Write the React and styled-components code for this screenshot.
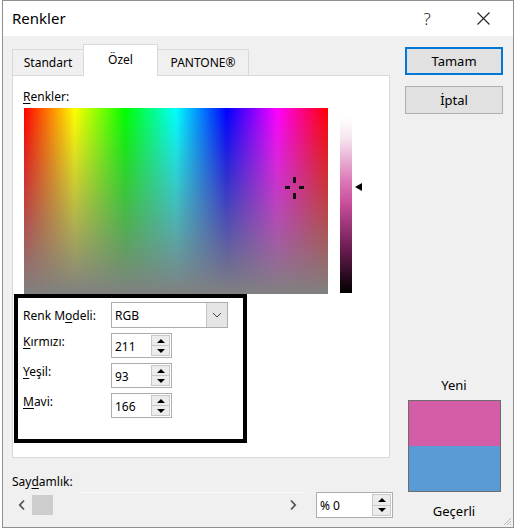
import React from 'react';
import styled, { createGlobalStyle } from 'styled-components';

const GlobalStyle = createGlobalStyle`
  html, body {
    margin: 0;
    padding: 0;
    background: #fff;
  }
  body {
    font-family: "Noto Sans", "Segoe UI", sans-serif;
    font-size: 12px;
    color: #000;
  }
`;

// window frame
const Dialog = styled.div`
  position: relative;
  box-sizing: border-box;
  width: 512px;
  height: 528px;
  margin-left: 2px;
  border: 1px solid #8f8f8f;
  background: #f0f0f0;
  display: flex;
  flex-direction: column;
`;

const TitleBar = styled.div`
  height: 35px;
  flex: none;
  background: #fff;
  display: flex;
  align-items: center;
  padding-left: 9px;
`;

const Title = styled.div`
  flex: 1;
  font-size: 15px;
  padding-bottom: 1px;
`;

const CaptionButton = styled.div`
  width: 30px;
  height: 30px;
  display: flex;
  align-items: center;
  justify-content: center;
  margin-right: ${(p) => p.$mr || 0}px;
  font-size: 17px;
  font-weight: 300;
  color: #222;
`;

const Body = styled.div`
  flex: 1;
  display: flex;
  padding-left: 9px;
`;

const LeftCol = styled.div`
  width: 378px;
  flex: none;
  display: flex;
  flex-direction: column;
  padding-top: 8px;
`;

// tabs
const TabRow = styled.div`
  height: 31px;
  display: flex;
  align-items: flex-end;
  position: relative;
  z-index: 1;
`;

const Tab = styled.div`
  box-sizing: border-box;
  width: ${(p) => p.$w}px;
  height: ${(p) => (p.$active ? 32 : 26)}px;
  margin-bottom: ${(p) => (p.$active ? -1 : 0)}px;
  margin-right: -1px;
  border: 1px solid #d9d9d9;
  border-bottom: none;
  background: ${(p) => (p.$active ? '#fff' : '#f0f0f0')};
  display: flex;
  align-items: center;
  justify-content: center;
  padding-bottom: ${(p) => (p.$active ? 3 : 0)}px;
`;

const Panel = styled.div`
  box-sizing: border-box;
  height: 383px;
  background: #fff;
  border: 1px solid #d9d9d9;
  display: flex;
  flex-direction: column;
`;

const Label = styled.div`
  line-height: 16px;
  white-space: nowrap;
`;

const PanelLabel = styled(Label)`
  margin: 13px 0 0 10px;
`;

const U = styled.span`
  text-decoration: underline;
  text-underline-offset: 2px;
`;

const PickerRow = styled.div`
  display: flex;
  align-items: flex-start;
  margin: 3px 0 0 11px;
`;

const Spectrum = styled.div`
  position: relative;
  width: 304px;
  height: 186px;
  background:
    linear-gradient(to bottom, rgba(128, 128, 128, 0), rgb(128, 128, 128)),
    linear-gradient(
      to right,
      #f00,
      #ff0 16.67%,
      #0f0 33.33%,
      #0ff 50%,
      #00f 66.67%,
      #f0f 83.33%,
      #f00
    );
`;

const Crosshair = styled.svg`
  position: absolute;
  left: 261px;
  top: 69px;
`;

const LumColumn = styled.div`
  position: relative;
  margin-left: 12px;
  padding-top: 9px;
`;

const LumBar = styled.div`
  width: 12px;
  height: 176px;
  background: linear-gradient(
    to bottom,
    #fff 0%,
    #f6e6ef 12%,
    #dc7ab8 36%,
    #c64c98 50%,
    #6a1c50 75%,
    #000 100%
  );
`;

const LumArrow = styled.div`
  position: absolute;
  left: 15px;
  top: 75px;
  width: 0;
  height: 0;
  border-top: 4px solid transparent;
  border-bottom: 4px solid transparent;
  border-right: 7px solid #000;
`;

// annotation box around the colour model fields
const ModelBox = styled.div`
  box-sizing: border-box;
  width: 233px;
  height: 149px;
  margin-left: 1px;
  border: 4px solid #000;
  background: #fff;
  padding: 4px 0 0 5px;
  display: grid;
  grid-template-columns: 88px auto;
  grid-auto-rows: min-content;
  row-gap: 5px;
  align-items: start;
  position: relative;
  z-index: 1;
`;

const FieldLabel = styled(Label)`
  padding-top: ${(p) => p.$pt || 0}px;
`;

const Select = styled.div`
  box-sizing: border-box;
  width: 117px;
  height: 26px;
  border: 1px solid #adadad;
  background: #fff;
  display: flex;
  align-items: center;
`;

const SelectValue = styled.div`
  flex: 1;
  padding-left: 3px;
`;

const SelectButton = styled.div`
  box-sizing: border-box;
  width: 21px;
  height: 24px;
  background: #e5e5e5;
  border-left: 1px solid #c4c4c4;
  display: flex;
  align-items: center;
  justify-content: center;
`;

const SpinBox = styled.div`
  box-sizing: border-box;
  width: ${(p) => p.$w}px;
  height: ${(p) => p.$h}px;
  border: 1px solid #adadad;
  background: #fff;
  display: flex;
  align-items: center;
`;

const SpinValue = styled.div`
  flex: 1;
  padding-left: 3px;
  padding-top: 1px;
`;

const SpinButtons = styled.div`
  align-self: stretch;
  width: 19px;
  margin: 1px 1px 1px 0;
  display: flex;
  flex-direction: column;
  border: 1px solid #c8c8c8;
  box-sizing: border-box;
`;

const SpinBtn = styled.div`
  flex: 1;
  background: #ececec;
  display: flex;
  align-items: center;
  justify-content: center;
  border-top: ${(p) => (p.$dir === 'down' ? '1px solid #c8c8c8' : 'none')};

  &::after {
    content: '';
    width: 0;
    height: 0;
    border-left: 4px solid transparent;
    border-right: 4px solid transparent;
    ${(p) =>
      p.$dir === 'up'
        ? 'border-bottom: 4px solid #000;'
        : 'border-top: 4px solid #000;'}
  }
`;

// transparency
const TransparencyLabel = styled(Label)`
  margin-top: 16px;
`;

const ScrollRow = styled.div`
  margin-top: 2px;
  height: 26px;
  display: flex;
  align-items: center;
`;

const ScrollBar = styled.div`
  width: 291px;
  flex: none;
  height: 26px;
  display: flex;
  align-items: center;
  position: relative;

  &::before {
    content: '';
    position: absolute;
    left: 68px;
    right: 0;
    top: 0;
    height: 1px;
    background: #fafafa;
  }
`;

const ScrollArrow = styled.div`
  width: 20px;
  height: 20px;
  display: flex;
  align-items: center;
  justify-content: center;
`;

const Thumb = styled.div`
  width: 21px;
  height: 20px;
  background: #cdcdcd;
`;

const Spacer = styled.div`
  flex: 1;
`;

const PercentWrap = styled.div`
  margin-left: 13px;
`;

// right column
const RightCol = styled.div`
  width: 98px;
  flex: none;
  margin-left: 15px;
  padding: 11px 0 8px;
  display: flex;
  flex-direction: column;
`;

const Button = styled.div`
  box-sizing: border-box;
  height: 28px;
  background: #e1e1e1;
  border: ${(p) => (p.$primary ? '2px solid #0078d7' : '1px solid #adadad')};
  margin-top: ${(p) => p.$mt || 0}px;
  display: flex;
  align-items: center;
  justify-content: center;
  font-size: 13px;
`;

const PreviewGroup = styled.div`
  margin-top: auto;
  display: flex;
  flex-direction: column;
  align-items: center;
`;

const Preview = styled.div`
  box-sizing: border-box;
  width: 93px;
  height: 92px;
  margin-top: 7px;
  border: 1px solid #6d6d6d;
  display: flex;
  flex-direction: column;
`;

const Swatch = styled.div`
  flex: 1;
  background: ${(p) => p.$c};
`;

const CenterLabel = styled(Label)`
  font-size: 13px;
  margin-top: ${(p) => p.$mt || 0}px;
`;

const Grip = styled.svg`
  position: absolute;
  right: 1px;
  bottom: 1px;
`;

const Spin = ({ value, w, h }) => (
  <SpinBox $w={w} $h={h}>
    <SpinValue>{value}</SpinValue>
    <SpinButtons>
      <SpinBtn $dir="up" />
      <SpinBtn $dir="down" />
    </SpinButtons>
  </SpinBox>
);

const Chevron = ({ dir }) => (
  <svg width="8" height="12" viewBox="0 0 8 12">
    <path
      d={dir === 'left' ? 'M6 1.5 L1.8 6 L6 10.5' : 'M2 1.5 L6.2 6 L2 10.5'}
      fill="none"
      stroke="#555"
      strokeWidth="1.8"
    />
  </svg>
);

export default function App() {
  return (
    <>
      <GlobalStyle />
      <Dialog>
        <TitleBar>
          <Title>Renkler</Title>
          <CaptionButton $mr={26}>?</CaptionButton>
          <CaptionButton $mr={15}>
            <svg width="13" height="13" viewBox="0 0 13 13">
              <path d="M0.5 0.5 L12.5 12.5 M12.5 0.5 L0.5 12.5" stroke="#222" strokeWidth="1.1" />
            </svg>
          </CaptionButton>
        </TitleBar>

        <Body>
          <LeftCol>
            <TabRow>
              <Tab $w={72}>Standart</Tab>
              <Tab $w={75} $active>Özel</Tab>
              <Tab $w={92}>PANTONE®</Tab>
            </TabRow>
            <Panel>
              <PanelLabel>
                <U>R</U>enkler:
              </PanelLabel>
              <PickerRow>
                <Spectrum>
                  <Crosshair width="20" height="22" viewBox="0 0 20 22">
                    <rect x="8" y="0" width="3" height="6" fill="#111" />
                    <rect x="8" y="16" width="3" height="6" fill="#111" />
                    <rect x="0" y="9" width="5" height="3" fill="#111" />
                    <rect x="14" y="9" width="5" height="3" fill="#111" />
                  </Crosshair>
                </Spectrum>
                <LumColumn>
                  <LumBar />
                  <LumArrow />
                </LumColumn>
              </PickerRow>
              <ModelBox>
                <FieldLabel $pt={6}>
                  Renk M<U>o</U>deli:
                </FieldLabel>
                <Select>
                  <SelectValue>RGB</SelectValue>
                  <SelectButton>
                    <svg width="10" height="6" viewBox="0 0 10 6">
                      <path d="M1 1 L5 5 L9 1" fill="none" stroke="#444" strokeWidth="1" />
                    </svg>
                  </SelectButton>
                </Select>
                <FieldLabel $pt={1}>
                  <U>K</U>ırmızı:
                </FieldLabel>
                <Spin value="211" w={61} h={25} />
                <FieldLabel $pt={1}>
                  <U>Y</U>eşil:
                </FieldLabel>
                <Spin value="93" w={61} h={25} />
                <FieldLabel $pt={1}>
                  <U>M</U>avi:
                </FieldLabel>
                <Spin value="166" w={61} h={25} />
              </ModelBox>
            </Panel>
            <TransparencyLabel>
              Say<U>d</U>amlık:
            </TransparencyLabel>
            <ScrollRow>
              <ScrollBar>
                <ScrollArrow>
                  <Chevron dir="left" />
                </ScrollArrow>
                <Thumb />
                <Spacer />
                <ScrollArrow>
                  <Chevron dir="right" />
                </ScrollArrow>
              </ScrollBar>
              <PercentWrap>
                <Spin value="% 0" w={77} h={26} />
              </PercentWrap>
            </ScrollRow>
          </LeftCol>

          <RightCol>
            <Button $primary>Tamam</Button>
            <Button $mt={11}>İptal</Button>
            <PreviewGroup>
              <CenterLabel>Yeni</CenterLabel>
              <Preview>
                <Swatch $c="#d35da6" />
                <Swatch $c="#5b9bd5" />
              </Preview>
              <CenterLabel $mt={11}>Geçerli</CenterLabel>
            </PreviewGroup>
          </RightCol>
        </Body>

        <Grip width="10" height="10" viewBox="0 0 10 10">
          <path d="M9 2 L2 9 M9 5 L5 9 M9 8 L8 9" stroke="#b5b5b5" strokeWidth="1" />
        </Grip>
      </Dialog>
    </>
  );
}
